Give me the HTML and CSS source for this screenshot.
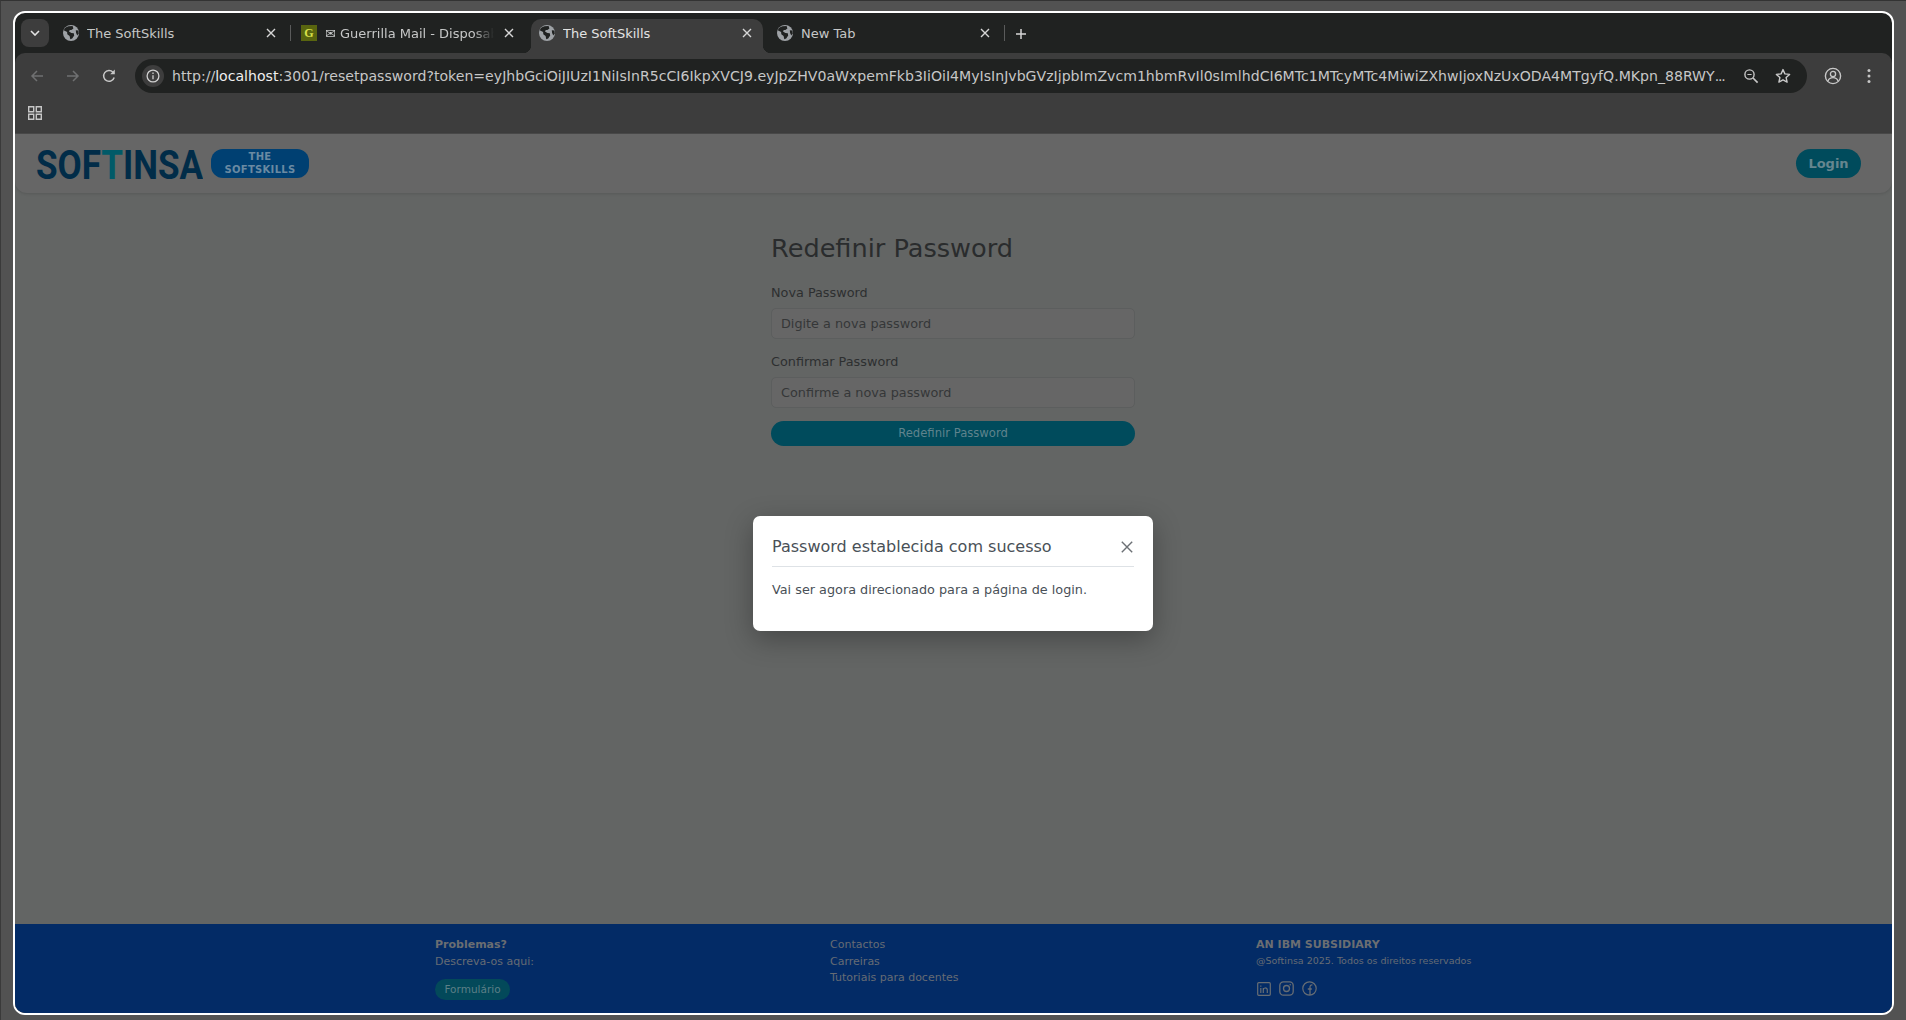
FILE: index.html
```html
<!DOCTYPE html>
<html lang="pt">
<head>
<meta charset="utf-8">
<title>The SoftSkills</title>
<link rel="stylesheet" href="styles.css">
</head>
<body>
<svg class="defs" width="0" height="0" aria-hidden="true">
  <symbol id="globe" viewBox="0 0 16 16">
    <circle cx="8" cy="8" r="8" fill="#9ea2a6"/>
    <path d="M5.5 1.2 9.6 1l.8 2.4-2 1.6-1.6.1-.8 1.5 2.4 1.3 2.4.3.4 2.2-2 3.2-1.9.7-.7-3.4-2.3-1.6-.2-2.2L.6 5.2 2.6 2.6z" fill="#202221"/>
    <path d="M12.8 5.2l2.6.4.3 2.6-1.4 2.2-1.2-2.4z" fill="#202221"/>
  </symbol>
  <symbol id="close" viewBox="0 0 10 10">
    <path d="M1 1l8 8M9 1l-8 8" fill="none" stroke="currentColor" stroke-width="1.4"/>
  </symbol>
</svg>
<div class="window">
  <div class="tabstrip">
    <button class="tab-search"><svg width="10" height="6" viewBox="0 0 10 6"><path d="M1 1l4 4 4-4" fill="none" stroke="#e3e3e3" stroke-width="1.6"/></svg></button>
    <div class="tab">
      <svg class="tab-icon"><use href="#globe"/></svg>
      <span class="tab-title">The SoftSkills</span>
      <svg class="tab-close"><use href="#close"/></svg>
    </div>
    <span class="tab-sep"></span>
    <div class="tab">
      <span class="favicon">G</span>
      <span class="tab-title tab-title-fade">✉ Guerrilla Mail - Disposable Temporary</span>
      <svg class="tab-close"><use href="#close"/></svg>
    </div>
    <span class="tab-sep tab-sep-hidden"></span>
    <div class="tab tab-active">
      <svg class="tab-icon"><use href="#globe"/></svg>
      <span class="tab-title">The SoftSkills</span>
      <svg class="tab-close"><use href="#close"/></svg>
    </div>
    <span class="tab-sep tab-sep-hidden"></span>
    <div class="tab">
      <svg class="tab-icon"><use href="#globe"/></svg>
      <span class="tab-title">New Tab</span>
      <svg class="tab-close"><use href="#close"/></svg>
    </div>
    <span class="tab-sep"></span>
    <svg class="tab-new" width="12" height="12" viewBox="0 0 12 12"><path d="M6 1v10M1 6h10" stroke="#d6d6d6" stroke-width="1.5"/></svg>
  </div>

  <div class="toolbar">
    <div class="navrow">
      <svg class="nav nav-back" width="16" height="16" viewBox="0 0 16 16"><path d="M14 8H3M8 3 3 8l5 5" fill="none" stroke="#6f7071" stroke-width="1.5"/></svg>
      <svg class="nav nav-fwd" width="16" height="16" viewBox="0 0 16 16"><path d="M2 8h11M8 3l5 5-5 5" fill="none" stroke="#6f7071" stroke-width="1.5"/></svg>
      <svg class="nav nav-reload" width="16" height="16" viewBox="0 0 16 16"><path d="M13.2 9.5A5.4 5.4 0 1 1 12 4.2" fill="none" stroke="#c7c7c7" stroke-width="1.5"/><path d="M13.8 1.6v4.6H9.2z" fill="#c7c7c7"/></svg>
      <div class="omnibox">
        <span class="site-info"><svg width="14" height="14" viewBox="0 0 14 14"><circle cx="7" cy="7" r="5.9" fill="none" stroke="#d0d0d0" stroke-width="1.3"/><path d="M7 6.2v4M7 3.6v1.5" stroke="#d0d0d0" stroke-width="1.3"/></svg></span>
        <span class="url">http://<span class="url-host">localhost</span>:3001/resetpassword?token=eyJhbGciOiJIUzI1NiIsInR5cCI6IkpXVCJ9.eyJpZHV0aWxpemFkb3IiOiI4MyIsInJvbGVzIjpbImZvcm1hbmRvIl0sImlhdCI6MTc1MTcyMTc4MiwiZXhwIjoxNzUxODA4MTgyfQ.MKpn_88RWY<span class="url-more">...</span></span>
        <svg class="omni-zoom" width="16" height="16" viewBox="0 0 16 16"><circle cx="6.5" cy="6.5" r="4.6" fill="none" stroke="#c7c7c7" stroke-width="1.4"/><path d="M10 10l4.6 4.6" stroke="#c7c7c7" stroke-width="1.7"/><path d="M4.4 6.5h4.2" stroke="#c7c7c7" stroke-width="1.2"/></svg>
        <svg class="omni-star" width="16" height="16" viewBox="0 0 16 16"><path d="M8 1.6l1.9 4.3 4.7.5-3.5 3.1 1 4.6L8 11.8l-4.1 2.3 1-4.6L1.4 6.4l4.7-.5z" fill="none" stroke="#c7c7c7" stroke-width="1.4" stroke-linejoin="round"/></svg>
      </div>
      <svg class="tool-profile" width="18" height="18" viewBox="0 0 18 18"><circle cx="9" cy="9" r="7.6" fill="none" stroke="#c7c7c7" stroke-width="1.4"/><circle cx="9" cy="7" r="2.6" fill="none" stroke="#c7c7c7" stroke-width="1.3"/><path d="M4 14c1-2.6 2.8-3.3 5-3.3s4 .7 5 3.3" fill="none" stroke="#c7c7c7" stroke-width="1.3"/></svg>
      <svg class="tool-menu" width="4" height="16" viewBox="0 0 4 16"><circle cx="2" cy="2.5" r="1.5" fill="#c7c7c7"/><circle cx="2" cy="8" r="1.5" fill="#c7c7c7"/><circle cx="2" cy="13.5" r="1.5" fill="#c7c7c7"/></svg>
    </div>
    <div class="bookmarks">
      <svg width="14" height="14" viewBox="0 0 14 14"><path d="M.7.7h5v5h-5zM8.3.7h5v5h-5zM.7 8.3h5v5h-5zM8.3 8.3h5v5h-5z" fill="none" stroke="#c7c7c7" stroke-width="1.4"/></svg>
    </div>
  </div>

  <div class="page">
    <header class="site-header">
      <div class="brand">
        <svg class="logo" width="167" height="30" viewBox="0 0 167 30"><text class="logo-text" x="0" y="29.5" textLength="167" lengthAdjust="spacingAndGlyphs">SOF<tspan class="logo-t">T</tspan>INSA</text></svg>
        <span class="brand-pill">THE<br>SOFTSKILLS</span>
      </div>
      <button class="login">Login</button>
    </header>

    <main class="main">
      <form class="reset-form">
        <h1 class="form-title">Redefinir Password</h1>
        <label class="field-label">Nova Password</label>
        <div class="field-input">Digite a nova password</div>
        <label class="field-label field-label-2">Confirmar Password</label>
        <div class="field-input">Confirme a nova password</div>
        <div class="submit">Redefinir Password</div>
      </form>
    </main>

    <footer class="site-footer">
      <div class="foot-col foot-col-1">
        <strong class="foot-strong">Problemas?</strong>
        <span class="foot-line">Descreva-os aqui:</span>
        <span class="foot-pill">Formulário</span>
      </div>
      <div class="foot-col foot-col-2">
        <span class="foot-link">Contactos</span>
        <span class="foot-link">Carreiras</span>
        <span class="foot-link">Tutoriais para docentes</span>
      </div>
      <div class="foot-col">
        <strong class="foot-strong">AN IBM SUBSIDIARY</strong>
        <span class="foot-copy">@Softinsa 2025. Todos os direitos reservados</span>
        <div class="social">
          <svg width="14" height="14" viewBox="0 0 14 14"><rect x=".7" y=".7" width="12.6" height="12.6" rx="1" fill="none" stroke="#676d74" stroke-width="1.2"/><path d="M3.8 6v5M3.8 3.4v1.3M6.3 11V6M6.3 8c0-2.6 4-2.8 4 0v3" fill="none" stroke="#676d74" stroke-width="1.2"/></svg>
          <svg width="15" height="15" viewBox="0 0 15 15"><rect x=".8" y=".8" width="13.4" height="13.4" rx="3.6" fill="none" stroke="#676d74" stroke-width="1.3"/><circle cx="7.5" cy="7.5" r="3" fill="none" stroke="#676d74" stroke-width="1.3"/><circle cx="11.2" cy="3.8" r=".8" fill="#676d74"/></svg>
          <svg width="15" height="15" viewBox="0 0 15 15"><circle cx="7.5" cy="7.5" r="6.7" fill="none" stroke="#676d74" stroke-width="1.2"/><path d="M8 14V6.2c0-1.7.8-2.4 2.4-2.3M5.8 8h4" fill="none" stroke="#676d74" stroke-width="1.3"/></svg>
        </div>
      </div>
    </footer>

    <div class="modal" role="dialog">
      <div class="modal-head">
        <h2 class="modal-title">Password establecida com sucesso</h2>
        <svg class="modal-close" width="12" height="12" viewBox="0 0 12 12"><path d="M.8.8l10.4 10.4M11.2.8.8 11.2" stroke="#6c7075" stroke-width="1.4"/></svg>
      </div>
      <p class="modal-body">Vai ser agora direcionado para a página de login.</p>
    </div>
  </div>
</div>
</body>
</html>
```

FILE: styles.css
```css
* { box-sizing: border-box; }
html, body { height: 100%; }
body {
  margin: 0;
  padding: 10px 12px 5px 12px;
  background: #525252;
  border-top: 1px solid #333;
  border-left: 1px solid #3a3a3a;
  font-family: "DejaVu Sans", sans-serif;
  overflow: hidden;
}
.defs { position: absolute; }

.window {
  height: 1004px;
  border: 2px solid #fff;
  border-radius: 12px;
  background: #202221;
  overflow: hidden;
  display: flex;
  flex-direction: column;
}

/* tab strip */
.tabstrip {
  flex: 0 0 40px;
  display: flex;
  align-items: flex-end;
  padding-left: 6px;
}
.tab-search {
  flex: 0 0 28px;
  height: 28px;
  margin: 0 6px 6px 0;
  padding: 0;
  border: 0;
  border-radius: 8px;
  background: #3d3d3d;
  display: flex;
  align-items: center;
  justify-content: center;
}
.tab {
  position: relative;
  flex: 0 0 232px;
  min-width: 0;
  height: 34px;
  padding: 0 9px 6px 8px;
  display: flex;
  align-items: center;
  border-radius: 10px 10px 0 0;
  color: #c6c7c7;
  font-size: 13px;
}
.tab-active { background: #3d3d3d; color: #e3e3e3; }
.tab-active::before, .tab-active::after {
  content: "";
  position: absolute;
  bottom: 0;
  width: 8px;
  height: 8px;
}
.tab-active::before { left: -8px; background: radial-gradient(circle at 0 0, transparent 8px, #3d3d3d 8.5px); }
.tab-active::after { right: -8px; background: radial-gradient(circle at 100% 0, transparent 8px, #3d3d3d 8.5px); }
.tab-icon { flex: 0 0 16px; width: 16px; height: 16px; margin-right: 8px; }
.favicon {
  flex: 0 0 16px;
  height: 16px;
  margin-right: 8px;
  background: #59650f;
  color: #d7e04a;
  font: 700 12px/16px "Liberation Serif", serif;
  text-align: center;
}
.tab-title { flex: 1; min-width: 0; white-space: nowrap; overflow: hidden; }
.tab-title-fade {
  -webkit-mask-image: linear-gradient(90deg, #000 88%, transparent 100%);
  mask-image: linear-gradient(90deg, #000 88%, transparent 100%);
  margin-right: 3px;
}
.tab-close { flex: 0 0 10px; width: 10px; height: 10px; margin-left: 7px; margin-right: 2px; color: #d6d6d6; }
.tab-sep { flex: 0 0 1px; height: 16px; margin: 0 2.5px 12px; background: #5a5b5b; }
.tab-sep-hidden { visibility: hidden; }
.tab-new { margin: 0 0 13px 8px; }

/* toolbar */
.toolbar {
  flex: 0 0 81px;
  background: #3d3d3d;
  border-radius: 10px 10px 0 0;
  border-bottom: 1px solid #4a4a4a;
  display: flex;
  flex-direction: column;
}
.navrow { height: 40px; padding-top: 6px; display: flex; align-items: flex-start; }
.nav { margin-top: 9px; }
.nav-back { margin-left: 14px; }
.nav-fwd { margin-left: 20px; }
.nav-reload { margin-left: 20px; margin-right: 18px; }
.omnibox {
  flex: 0 0 1672px;
  height: 34px;
  border-radius: 17px;
  background: #202221;
  display: flex;
  align-items: center;
  padding-left: 7px;
}
.site-info {
  flex: 0 0 22px;
  height: 22px;
  border-radius: 50%;
  background: #3d3d3d;
  display: flex;
  align-items: center;
  justify-content: center;
  margin-right: 8px;
}
.url {
  flex: 0 0 1555px;
  overflow: hidden;
  white-space: nowrap;
  color: #c7c7c7;
  font-size: 14.1px;
}
.url-host { color: #efefef; }
.url-more { letter-spacing: -1.2px; }
.omni-zoom { margin-left: 16px; }
.omni-star { margin-left: 16px; }
.tool-profile { margin: 8px 0 0 17px; }
.tool-menu { margin: 9px 0 0 25px; }
.bookmarks { height: 40px; padding: 12px 0 0 13px; }

/* page (dimmed under the dialog) */
.page {
  position: relative;
  flex: 1;
  min-height: 0;
  background: #636564;
  display: flex;
  flex-direction: column;
}
.site-header {
  flex: 0 0 59px;
  background: #666;
  border-radius: 0 0 12px 12px;
  box-shadow: 0 1px 3px rgba(0, 0, 0, .12);
  display: flex;
  align-items: center;
  justify-content: space-between;
  padding: 0 31px 0 21px;
}
.brand { display: flex; align-items: center; gap: 8px; }
.logo { display: block; }
.logo-text { font: 700 41px Roboto, sans-serif; fill: #012c48; }
.logo-t { fill: #005a68; }
.brand-pill {
  width: 98px;
  height: 29px;
  border-radius: 12px;
  background: #004072;
  color: #6a8aa2;
  font-size: 10px;
  font-weight: 700;
  line-height: 12.5px;
  letter-spacing: .3px;
  text-align: center;
  padding-top: 2px;
}
.login {
  width: 65px;
  height: 29px;
  padding: 0;
  border: 0;
  border-radius: 15px;
  background: #004b5c;
  color: #66868f;
  font: 700 13px "DejaVu Sans", sans-serif;
}

.main { flex: 1; min-height: 0; display: flex; justify-content: center; }
.reset-form { width: 364px; margin-right: 1px; padding-top: 40px; color: #2d2f30; }
.form-title { margin: 0 0 22px; font-size: 25.6px; font-weight: 400; line-height: 30px; color: #2a2c2d; }
.field-label { display: block; font-size: 12.8px; line-height: 16px; margin-bottom: 7px; }
.field-label-2 { margin-top: 15px; margin-bottom: 7px; }
.field-input {
  height: 31px;
  border: 1px solid #5c5e5e;
  border-radius: 5px;
  background: #666;
  padding-left: 9px;
  font-size: 12.8px;
  line-height: 29px;
  color: #353738;
}
.submit {
  height: 25px;
  margin-top: 13px;
  border-radius: 13px;
  background: #004b5c;
  color: #5f838d;
  font-size: 11.6px;
  line-height: 24px;
  text-align: center;
}

.site-footer {
  flex: 0 0 89px;
  background: #032b66;
  padding: 13px 0 0 420px;
  display: flex;
  font-size: 11px;
  line-height: 16px;
  color: #666c74;
}
.foot-col { display: flex; flex-direction: column; align-items: flex-start; }
.foot-col-1 { flex: 0 0 395px; }
.foot-col-2 { flex: 0 0 426px; }
.foot-strong { font-weight: 700; color: #6b6e72; }
.foot-line { margin-top: 1px; }
.foot-link { margin-bottom: .5px; }
.foot-pill {
  width: 75px;
  height: 21px;
  margin-top: 9px;
  border-radius: 11px;
  background: #03495a;
  color: #5c7f87;
  font-size: 10.5px;
  line-height: 20px;
  text-align: center;
}
.foot-copy { margin-top: 0; font-size: 9.5px; }
.social { display: flex; align-items: center; gap: 8px; margin: 12px 0 0 1px; }
.social svg { display: block; }

.modal {
  position: absolute;
  top: 382px;
  left: 738px;
  width: 400px;
  height: 115px;
  padding: 0 19px;
  border-radius: 7px;
  background: #fff;
  box-shadow: 0 8px 28px rgba(0, 0, 0, .3);
}
.modal-head {
  height: 51px;
  border-bottom: 1px solid #dee2e6;
  display: flex;
  align-items: center;
  justify-content: space-between;
  padding: 10px 0 0;
}
.modal-title { margin: 0; font-size: 16px; font-weight: 400; color: #495057; }
.modal-close { margin-right: 1px; margin-top: 2px; }
.modal-body { margin: 14px 0 0; font-size: 12.8px; line-height: 17px; color: #495057; }
```
